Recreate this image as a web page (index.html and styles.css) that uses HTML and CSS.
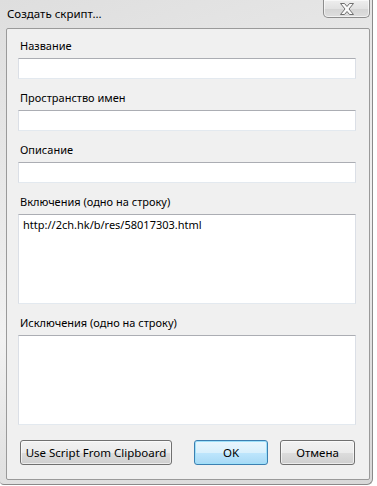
FILE: index.html
```html
<!DOCTYPE html>
<html lang="ru">
<head>
    <meta charset="UTF-8">
    <title>Создать скрипт...</title>
    <link rel="stylesheet" href="styles.css">
</head>
<body>
    <div class="window">
        <div class="titlebar">
            <span class="title">Создать скрипт...</span>
            <button class="close" type="button" aria-label="Закрыть">
                <svg width="16" height="12" viewBox="0 0 16 12">
                    <path d="M1.5 0.5h4l2.5 3 2.5-3h4l-4.5 5.5 4.5 5.5h-4l-2.5-3-2.5 3h-4l4.5-5.5z" fill="#fbfbfb" stroke="#6f6f6f" stroke-width="1" stroke-linejoin="round"/>
                </svg>
            </button>
        </div>
        <div class="client">
            <div class="field first">
                <label>Название</label>
                <input type="text" class="box">
            </div>
            <div class="field">
                <label>Пространство имен</label>
                <input type="text" class="box">
            </div>
            <div class="field">
                <label>Описание</label>
                <input type="text" class="box">
            </div>
            <div class="field">
                <label>Включения (одно на строку)</label>
                <textarea class="box area">http://2ch.hk/b/res/58017303.html</textarea>
            </div>
            <div class="field">
                <label>Исключения (одно на строку)</label>
                <textarea class="box area"></textarea>
            </div>
            <div class="buttons">
                <button class="btn clip" type="button">Use Script From Clipboard</button>
                <button class="btn ok" type="button">OK</button>
                <button class="btn cancel" type="button">Отмена</button>
            </div>
        </div>
    </div>
</body>
</html>
```

FILE: styles.css
```css
* {
    margin: 0;
    padding: 0;
    box-sizing: border-box;
}

body {
    background: #ffffff;
    font-family: 'Noto Sans', 'Open Sans', sans-serif;
    font-size: 11px;
    color: #000;
}

.window {
    width: 373px;
    height: 485px;
    display: flex;
    flex-direction: column;
    background: linear-gradient(160deg, #dedede 0%, #ebebeb 40%, #f2f2f2 55%, #e2e2e2 75%, #d8d8d8 100%);
    border-right: 1px solid #8a8a8a;
    border-bottom: 1px solid #8a8a8a;
    border-bottom-right-radius: 6px;
    border-bottom-left-radius: 4px;
}

.titlebar {
    height: 28px;
    display: flex;
    align-items: flex-start;
    padding-left: 7px;
}

.title {
    line-height: 28px;
    font-size: 11.5px;
}

.close {
    margin-left: auto;
    margin-right: 2px;
    width: 47px;
    height: 18px;
    display: flex;
    align-items: center;
    justify-content: center;
    border: 1px solid #8d8d8d;
    border-top: none;
    border-radius: 0 0 5px 5px;
    background: linear-gradient(180deg, #eeeeee 0%, #e2e2e2 50%, #d4d4d4 51%, #dedede 100%);
    box-shadow: inset 0 0 0 1px rgba(255, 255, 255, 0.6);
}

.client {
    margin: 0 2px 0 6px;
    height: 452px;
    background: #f0f0f0;
    border: 1px solid #9a9a9a;
    border-radius: 2px;
    padding: 0 13px 0 11px;
    display: flex;
    flex-direction: column;
}

.field {
    display: flex;
    flex-direction: column;
    margin-top: 11px;
}

.field.first {
    margin-top: 9px;
}

.field label {
    line-height: 16px;
    margin-bottom: 4px;
    padding-left: 2px;
}

.box {
    height: 21px;
    width: 100%;
    background: #fff;
    border: 1px solid #dbdfe6;
    border-top-color: #abadb3;
    border-bottom-color: #e3e9ef;
    font-family: inherit;
    font-size: 11px;
    outline: none;
}

.area {
    height: 90px;
    resize: none;
    padding: 2px 4px;
    line-height: 16px;
    overflow: hidden;
}

.buttons {
    display: flex;
    margin-top: 15px;
    padding-left: 2px;
}

.btn {
    height: 25px;
    font-family: inherit;
    font-size: 11.5px;
    color: #000;
    border: 1px solid #707070;
    border-radius: 3px;
    background: linear-gradient(180deg, #f2f2f2 0%, #ebebeb 50%, #dddddd 51%, #cfcfcf 100%);
    box-shadow: inset 0 0 0 1px rgba(255, 255, 255, 0.6);
}

.clip {
    width: 152px;
}

.ok {
    width: 74px;
    margin-left: 22px;
    border-color: #3c7fb1;
    background: linear-gradient(180deg, #eaf6fd 0%, #d9f0fc 50%, #bee6fd 51%, #a7d9f5 100%);
    box-shadow: inset 0 0 0 1px #9ee0f9;
}

.cancel {
    width: 75px;
    margin-left: 12px;
}
```
